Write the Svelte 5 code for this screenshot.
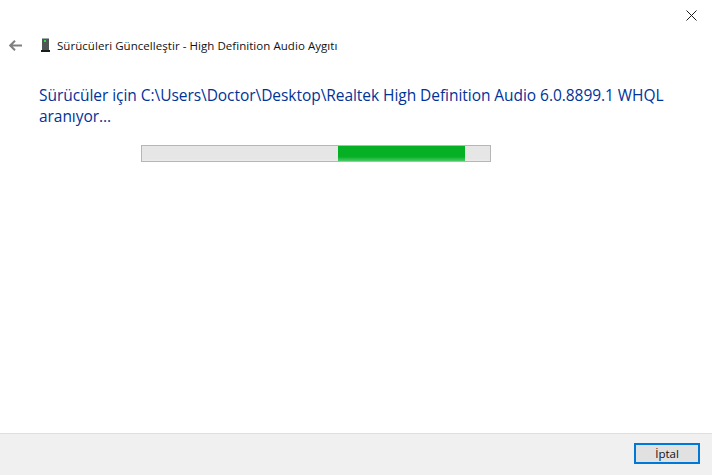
<script>
  let progress = { start: 196, width: 127 };
</script>

<div class="dialog">
  <div class="content">
    <div class="titlebar">
      <button class="close" aria-label="Kapat">
        <svg width="11" height="11" viewBox="0 0 11 11"><path d="M0.5 0.5 10.5 10.5M10.5 0.5 0.5 10.5" stroke="#1a1a1a" fill="none" /></svg>
      </button>
    </div>
    <div class="header">
      <svg class="back" width="13" height="11" viewBox="0 0 13 11"><path d="M6 0.7 1.2 5.5 6 10.3M1.2 5.5H13" stroke="#808080" stroke-width="2" fill="none" /></svg>
      <svg class="device" width="9" height="14" viewBox="0 0 9 14">
        <rect x="1" y="0" width="7" height="12" fill="#4f5455" />
        <rect x="1" y="0" width="7" height="1" fill="#a5a8a9" />
        <rect x="3" y="2" width="2" height="2" fill="#22e04a" />
        <rect x="0" y="12" width="9" height="2" fill="#1c1c1c" />
      </svg>
      <span class="title">Sürücüleri Güncelleştir - High Definition Audio Aygıtı</span>
    </div>
    <p class="status">Sürücüler için C:\Users\Doctor\Desktop\Realtek High Definition Audio 6.0.8899.1 WHQL aranıyor...</p>
    <div class="progress">
      <div class="bar" style="margin-left: {progress.start}px; width: {progress.width}px"></div>
    </div>
  </div>
  <div class="footer">
    <button class="cancel">İptal</button>
  </div>
</div>

<style>
  :global(body) {
    margin: 0;
    background: #fff;
  }

  .dialog {
    width: 712px;
    height: 475px;
    display: flex;
    flex-direction: column;
    font-family: "Open Sans", "Noto Sans", sans-serif;
    overflow: hidden;
  }

  .content {
    flex: 1;
    min-height: 0;
  }

  .titlebar {
    display: flex;
    justify-content: flex-end;
    height: 30px;
    padding: 10px 15px 0 0;
    box-sizing: border-box;
  }

  .close {
    border: 0;
    padding: 0;
    background: none;
    width: 11px;
    height: 11px;
    display: block;
  }

  .close svg {
    display: block;
  }

  .header {
    display: flex;
    align-items: center;
    height: 30px;
    padding-left: 9px;
  }

  .back {
    margin: 1px 19px 0 0;
  }

  .device {
    margin-right: 7px;
  }

  .title {
    font-size: 11.5px;
    color: #111;
    letter-spacing: 0.05px;
  }

  .status {
    margin: 25px 40px 0 39px;
    font-size: 15.5px;
    line-height: 21px;
    color: #003399;
    letter-spacing: -0.05px;
  }

  .progress {
    margin: 18px 0 0 141px;
    width: 350px;
    height: 17px;
    box-sizing: border-box;
    border: 1px solid #b6b6b6;
    background: linear-gradient(to bottom, #e6e6e6 0, #e6e6e6 85%, #ececec 100%);
    overflow: hidden;
  }

  .bar {
    height: 100%;
    background: linear-gradient(to bottom, #06b025 0, #06b025 73%, #1db83a 80%, #4cc966 100%);
  }

  .footer {
    height: 42px;
    box-sizing: border-box;
    border-top: 1px solid #dfdfdf;
    background: #f0f0f0;
    display: flex;
    justify-content: flex-end;
    padding: 9px 12px 0 0;
  }

  .cancel {
    width: 66px;
    height: 21px;
    box-sizing: border-box;
    border: 2px solid #0078d7;
    background: #e1e1e1;
    padding: 0;
    font-family: inherit;
    font-size: 11.5px;
    color: #111;
    line-height: 1;
  }
</style>
